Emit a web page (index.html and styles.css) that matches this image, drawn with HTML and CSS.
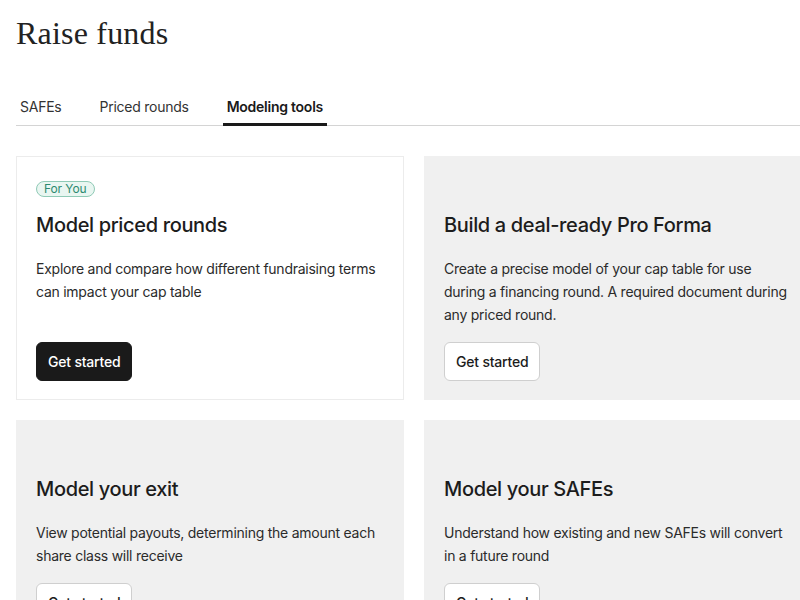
FILE: index.html
```html
<!DOCTYPE html>
<html lang="en">
<head>
    <meta charset="UTF-8">
    <meta name="viewport" content="width=device-width, initial-scale=1.0">
    <title>Raise funds</title>
    <link rel="stylesheet" href="styles.css">
</head>
<body>
    <div class="page">
        <h1 class="title">Raise funds</h1>
        <div class="tabs">
            <div class="tab">SAFEs</div>
            <div class="tab">Priced rounds</div>
            <div class="tab active">Modeling tools</div>
        </div>
        <div class="cards">
            <div class="card white">
                <span class="badge">For You</span>
                <h2>Model priced rounds</h2>
                <p>Explore and compare how different fundraising terms can impact your cap table</p>
                <button class="btn dark">Get started</button>
            </div>
            <div class="card">
                <span class="badge hidden">For You</span>
                <h2>Build a deal-ready Pro Forma</h2>
                <p>Create a precise model of your cap table for use during a financing round. A required document during any priced round.</p>
                <button class="btn">Get started</button>
            </div>
            <div class="card">
                <span class="badge hidden">For You</span>
                <h2>Model your exit</h2>
                <p>View potential payouts, determining the amount each share class will receive</p>
                <button class="btn">Get started</button>
            </div>
            <div class="card">
                <span class="badge hidden">For You</span>
                <h2>Model your SAFEs</h2>
                <p>Understand how existing and new SAFEs will convert in a future round</p>
                <button class="btn">Get started</button>
            </div>
        </div>
    </div>
</body>
</html>
```

FILE: styles.css
```css
* {padding: 0; margin: 0; box-sizing: border-box;}
html, body {overflow: hidden;}
body {background: #fff; color: #1c1c1c; font-family: Inter, "Noto Sans", sans-serif;}

.page {width: 796px; margin-left: 16px;}

.title {
    font-family: "Liberation Serif", "DejaVu Serif", serif;
    font-weight: 400;
    font-size: 32px;
    line-height: 40px;
    padding-top: 13px;
    color: #222;
    letter-spacing: 0.2px;
}

.tabs {display: flex; gap: 30px; margin-top: 44px; border-bottom: 1px solid #d4d4d4;}
.tab {padding: 0 4px 6px; font-size: 14px; line-height: 20px; color: #333; letter-spacing: -0.25px; border-bottom: 3px solid transparent; margin-bottom: -1px;}
.tab.active {font-weight: 600; color: #1a1a1a; border-bottom-color: #1a1a1a;}

.cards {display: grid; grid-template-columns: 388px 388px; gap: 20px; margin-top: 30px;}
.card {display: flex; flex-direction: column; align-items: flex-start; background: #f0f0f0; padding: 24px 20px 18px 19px; border: 1px solid #f0f0f0;}
.card.white {background: #fff; border-color: #ececec;}

.badge {font-size: 12px; line-height: 14px; padding: 0 7px; color: #2c8a70; background: #e9f6f1; border: 1px solid #8fcab6; border-radius: 10px; letter-spacing: -0.1px;}
.badge.hidden {visibility: hidden;}

.card h2 {font-size: 20px; font-weight: 500; line-height: 28px; margin-top: 14px; color: #1c1c1c; letter-spacing: -0.35px;}
.card p {font-size: 14px; line-height: 23px; margin: 18px 0 16px; color: #2b2b2b; letter-spacing: -0.25px;}

.btn {margin-top: auto; font-family: inherit; font-size: 14px; font-weight: 500; letter-spacing: -0.2px; height: 39px; padding: 0 11px; border-radius: 6px; border: 1px solid #cfcfcf; background: #fff; color: #1c1c1c;}
.btn.dark {background: #1a1a1a; border-color: #1a1a1a; color: #fff;}
```
